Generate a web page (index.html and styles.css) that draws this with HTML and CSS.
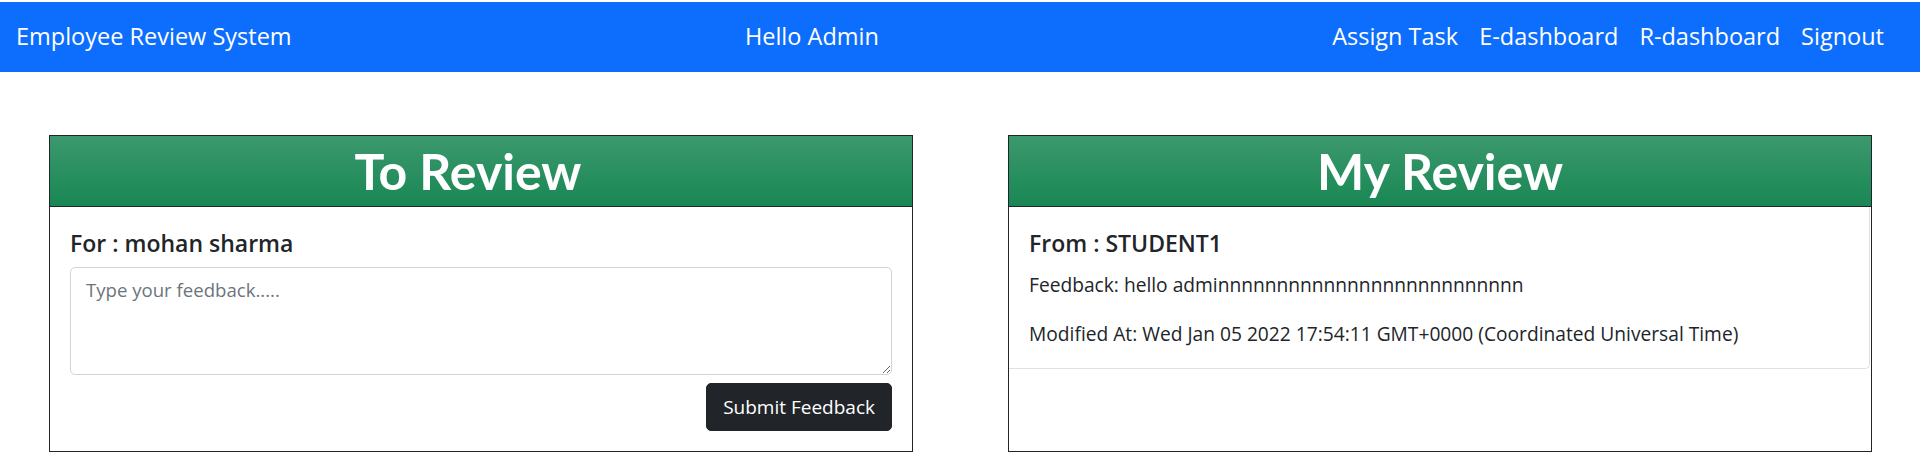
FILE: index.html
```html
<!DOCTYPE html>
<html lang="en">
<head>
<meta charset="utf-8">
<title>Employee Review System</title>
<link rel="stylesheet" href="styles.css">
</head>
<body>
<nav class="navbar">
  <a class="brand" href="#">Employee Review System</a>
  <span class="greeting">Hello Admin</span>
  <ul class="nav-links">
    <li><a href="#">Assign Task</a></li>
    <li><a href="#">E-dashboard</a></li>
    <li><a href="#">R-dashboard</a></li>
    <li><a href="#">Signout</a></li>
  </ul>
</nav>
<main class="reviews">
  <section class="card">
    <header class="card-header">
      <h1 class="card-title card-title--offset">To Review</h1>
    </header>
    <div class="card-body">
      <h5 class="review-name review-name--form">For : mohan sharma</h5>
      <form class="feedback-form">
        <textarea class="feedback-input" placeholder="Type your feedback....."></textarea>
        <div class="form-actions">
          <button type="button" class="btn-dark">Submit Feedback</button>
        </div>
      </form>
    </div>
  </section>
  <section class="card">
    <header class="card-header">
      <h1 class="card-title">My Review</h1>
    </header>
    <ul class="review-list">
      <li class="review-item">
        <h5 class="review-name">From : STUDENT1</h5>
        <p class="review-text">Feedback: hello adminnnnnnnnnnnnnnnnnnnnnnnnnn</p>
        <p class="review-text review-text--last">Modified At: Wed Jan 05 2022 17:54:11 GMT+0000 (Coordinated Universal Time)</p>
      </li>
    </ul>
  </section>
</main>
</body>
</html>
```
FILE: styles.css
```css
* { box-sizing: border-box; }

body {
  margin: 0;
  padding-top: 2px;
  background: #fff;
  color: #212529;
  font-family: "Open Sans", "Noto Sans", sans-serif;
  font-size: 19.2px;
  line-height: 1.5;
}

.navbar {
  display: flex;
  align-items: center;
  justify-content: space-between;
  height: 70px;
  padding: 0 36px 0 16px;
  background: #0d6efd;
}

.brand,
.greeting,
.nav-links a {
  color: #fff;
  text-decoration: none;
  font-size: 23.5px;
  line-height: 1.5;
}

.nav-links {
  display: flex;
  gap: 21px;
  margin: 0;
  padding: 0;
  list-style: none;
}

.reviews {
  display: grid;
  grid-template-columns: 1fr 1fr;
  gap: 95px;
  padding: 63px 48px 0 49px;
}

.card {
  display: flex;
  flex-direction: column;
  border: 1px solid #212529;
  background: #fff;
}

.card-header {
  background-color: #198754;
  background-image: linear-gradient(180deg, rgba(255,255,255,0.15), rgba(255,255,255,0));
  border-bottom: 1px solid #212529;
}

.card-title {
  margin: 0;
  color: #fff;
  text-align: center;
  font-family: "Lato", "Open Sans", sans-serif;
  font-size: 50px;
  font-weight: 700;
  line-height: 70px;
}

.card-title--offset { padding-right: 26px; }

.card-body {
  padding: 20px;
}

.review-name {
  margin: 0 0 12px;
  font-size: 23px;
  font-weight: 600;
  line-height: 1.3;
}

.review-name--form { margin: 2px 0 8px; }

.feedback-input {
  display: block;
  width: 100%;
  height: 108px;
  padding: 8px 15px;
  border: 1px solid #ced4da;
  border-radius: 5px;
  font-family: inherit;
  font-size: 18.6px;
  line-height: 1.5;
  color: #212529;
  resize: vertical;
}

.feedback-input::placeholder { color: #6c757d; }

.form-actions {
  display: flex;
  justify-content: flex-end;
  margin-top: 8px;
}

.btn-dark {
  height: 48px;
  padding: 0 16px;
  border: 1px solid #212529;
  border-radius: 5px;
  background: #212529;
  color: #fff;
  font-family: inherit;
  font-size: 19px;
  line-height: 1.5;
}

.review-list {
  margin: 0;
  padding: 0;
  list-style: none;
}

.review-item {
  padding: 22px 20px 20px;
  margin-right: 1px;
  border-right: 1px solid #dee2e6;
  border-bottom: 1px solid #dee2e6;
  border-bottom-right-radius: 5px;
}

.review-text {
  margin: 0 0 20px;
}

.review-text--last { margin-bottom: 0; }
```
